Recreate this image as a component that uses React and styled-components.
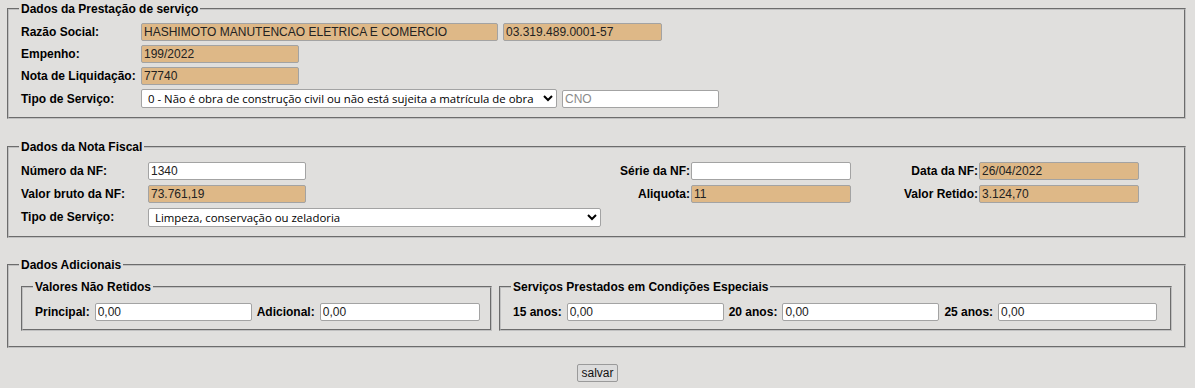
import React from "react";
import styled, { createGlobalStyle } from "styled-components";

const GlobalStyle = createGlobalStyle`
  body {
    margin: 0;
    background: #e0dfdd;
    font-family: "Liberation Sans", Arial, sans-serif;
    font-size: 12px;
    color: #000;
  }
`;

const Page = styled.div`
  display: flex;
  flex-direction: column;
  padding: 2px 9px 0 7px;
`;

const Fieldset = styled.fieldset`
  margin: ${(p) => p.$mt || 0}px 0 0 0;
  padding: ${(p) => p.$pt || 5}px 12px ${(p) => p.$pb || 10}px 12px;
  border: 2px groove #c0c0c0;
  min-width: 0;
`;

const Legend = styled.legend`
  font-weight: bold;
  font-size: 12px;
  line-height: 14px;
  padding: 0 2px;
  margin-left: -2px;
`;

const Rows = styled.div`
  display: flex;
  flex-direction: column;
  gap: ${(p) => p.$gap}px;
`;

const Row = styled.div`
  display: flex;
  align-items: center;
  gap: 5px;
`;

const Label = styled.label`
  font-weight: bold;
  white-space: nowrap;
  width: ${(p) => (p.$w ? `${p.$w}px` : "auto")};
  flex: none;
`;

const Input = styled.input`
  box-sizing: border-box;
  height: 18px;
  width: ${(p) => p.$w}px;
  flex: none;
  margin: 0;
  padding: 0 2px;
  border: 1px solid #a3a3a3;
  border-radius: 2px;
  background: ${(p) => (p.$locked ? "#deb887" : "#fff")};
  font-family: "Liberation Sans", Arial, sans-serif;
  font-size: 12px;
  color: #222;
  &::placeholder {
    color: #8a8a8a;
  }
`;

const Select = styled.select`
  box-sizing: border-box;
  height: 19px;
  width: ${(p) => p.$w}px;
  flex: none;
  margin: 0;
  padding: 0 0 0 2px;
  border: 1px solid #a3a3a3;
  border-radius: 2px;
  background: #fff;
  font-family: "Open Sans", "Noto Sans", sans-serif;
  font-size: 11.4px;
  color: #000;
`;

const Grid = styled.div`
  display: grid;
  grid-template-columns: 127px 158px 385px 160px 128px 160px;
  grid-auto-rows: 18px;
  row-gap: 5px;
  align-items: center;
`;

const Cell = styled.div`
  display: flex;
  align-items: center;
  justify-content: ${(p) => (p.$right ? "flex-end" : "flex-start")};
  grid-column: ${(p) => p.$span || "auto"};
  font-weight: ${(p) => (p.$bold ? "bold" : "normal")};
  padding-right: ${(p) => (p.$right ? 1 : 0)}px;
`;

const Split = styled.div`
  display: flex;
  gap: 7px;
`;

const Inner = styled(Fieldset)`
  flex: ${(p) => (p.$grow ? 1 : "none")};
  width: ${(p) => (p.$w ? `${p.$w}px` : "auto")};
  box-sizing: border-box;
`;

const Actions = styled.div`
  display: flex;
  justify-content: center;
  padding-top: 16px;
  padding-left: 2px;
`;

const Button = styled.button`
  height: 18px;
  padding: 0 3px;
  margin: 0;
  border: 1px solid #9a9a9a;
  border-radius: 2px;
  background: #dcdcdc;
  font-family: "Liberation Sans", Arial, sans-serif;
  font-size: 12px;
  color: #111;
`;

export default function App() {
  return (
    <>
      <GlobalStyle />
      <Page>
        <Fieldset $pt={7} $pb={9}>
          <Legend>Dados da Prestação de serviço</Legend>
          <Rows $gap={4}>
            <Row>
              <Label $w={115}>Razão Social:</Label>
              <Input $locked $w={357} readOnly value="HASHIMOTO MANUTENCAO ELETRICA E COMERCIO" />
              <Input $locked $w={159} readOnly value="03.319.489.0001-57" />
            </Row>
            <Row>
              <Label $w={115}>Empenho:</Label>
              <Input $locked $w={158} readOnly value="199/2022" />
            </Row>
            <Row>
              <Label $w={115}>Nota de Liquidação:</Label>
              <Input $locked $w={158} readOnly value="77740" />
            </Row>
            <Row>
              <Label $w={115}>Tipo de Serviço:</Label>
              <Select $w={416} defaultValue="0">
                <option value="0">
                  0 - Não é obra de construção civil ou não está sujeita a matrícula de obra
                </option>
              </Select>
              <Input $w={157} placeholder="CNO" />
            </Row>
          </Rows>
        </Fieldset>

        <Fieldset $mt={21} $pt={8} $pb={10}>
          <Legend>Dados da Nota Fiscal</Legend>
          <Grid>
            <Cell $bold>Número da NF:</Cell>
            <Cell><Input $w={158} defaultValue="1340" /></Cell>
            <Cell $bold $right>Série da NF:</Cell>
            <Cell><Input $w={160} defaultValue="" /></Cell>
            <Cell $bold $right>Data da NF:</Cell>
            <Cell><Input $locked $w={160} readOnly value="26/04/2022" /></Cell>

            <Cell $bold>Valor bruto da NF:</Cell>
            <Cell><Input $locked $w={158} readOnly value="73.761,19" /></Cell>
            <Cell $bold $right>Aliquota:</Cell>
            <Cell><Input $locked $w={160} readOnly value="11" /></Cell>
            <Cell $bold $right>Valor Retido:</Cell>
            <Cell><Input $locked $w={160} readOnly value="3.124,70" /></Cell>

            <Cell $bold>Tipo de Serviço:</Cell>
            <Cell $span="2 / span 2">
              <Select $w={453} defaultValue="limpeza">
                <option value="limpeza">Limpeza, conservação ou zeladoria</option>
              </Select>
            </Cell>
          </Grid>
        </Fieldset>

        <Fieldset $mt={20} $pt={8} $pb={15}>
          <Legend>Dados Adicionais</Legend>
          <Split>
            <Inner $w={471} $pt={9} $pb={8}>
              <Legend>Valores Não Retidos</Legend>
              <Row>
                <Label>Principal:</Label>
                <Input $w={157} defaultValue="0,00" />
                <Label>Adicional:</Label>
                <Input $w={160} defaultValue="0,00" />
              </Row>
            </Inner>
            <Inner $grow $pt={9} $pb={8}>
              <Legend>Serviços Prestados em Condições Especiais</Legend>
              <Row>
                <Label>15 anos:</Label>
                <Input $w={157} defaultValue="0,00" />
                <Label>20 anos:</Label>
                <Input $w={157} defaultValue="0,00" />
                <Label>25 anos:</Label>
                <Input $w={159} defaultValue="0,00" />
              </Row>
            </Inner>
          </Split>
        </Fieldset>

        <Actions>
          <Button>salvar</Button>
        </Actions>
      </Page>
    </>
  );
}
